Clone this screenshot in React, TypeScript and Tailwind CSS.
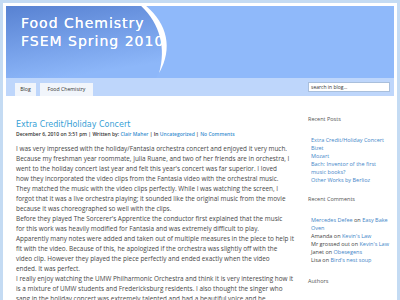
import React from 'react';

const RECENT_POSTS = [
  ['Extra Credit/Holiday Concert'],
  ['Bizet'],
  ['Mozart'],
  ['Bach: Inventor of the first', 'music books?'],
  ['Other Works by Berlioz'],
];

const HeaderArt: React.FC = () => (
  <svg className="absolute inset-0 w-full h-full" viewBox="0 0 388 72" preserveAspectRatio="none">
    <defs>
      <linearGradient id="hdrGrad" x1="0" y1="0" x2="0.35" y2="1">
        <stop offset="0" stopColor="#5882d2" />
        <stop offset="0.55" stopColor="#759fe8" />
        <stop offset="1" stopColor="#8db7f9" />
      </linearGradient>
    </defs>
    <path d="M0 0 L138 0 C158 18 164 42 153 66 L150 72 L0 72 Z" fill="url(#hdrGrad)" />
    <path d="M135 0 L140 0 C161 18 167 42 153 67 C160 42 154 18 135 0 Z" fill="#ffffff" />
  </svg>
);

const App: React.FC = () => {
  return (
    <div className="w-[400px] h-[300px] overflow-hidden bg-[#c4dbf3] pt-[3px] px-[3px]">
      <div className="h-full bg-white pt-[2.5px] pl-[2.5px] pr-[3px] overflow-hidden">
        {/* Header */}
        <div className="relative h-[72px] bg-[#8fb9fa] overflow-hidden">
          <HeaderArt />
          <h1 className="relative pl-[15.5px] pt-[8px] text-white text-[14px] leading-[18px] tracking-[1px] font-['DejaVu_Sans',sans-serif] [text-shadow:0_0_0.4px_#fff]">
            Food Chemistry
            <br />
            FSEM Spring 2010
          </h1>
        </div>

        {/* Nav */}
        <div className="h-[18px] bg-[#bed6fb] flex justify-between pl-[9.5px] pr-[4px] font-['Open_Sans',sans-serif]">
          <div className="flex items-end gap-[4px]">
            <span className="h-[12.5px] w-[21px] bg-[#f1f5fb] text-[#333] text-[5.2px] leading-[12.5px] text-center">Blog</span>
            <span className="h-[12.5px] w-[53px] bg-[#f1f5fb] text-[#333] text-[5.2px] leading-[12.5px] text-center">Food Chemistry</span>
          </div>
          <div className="pt-[4.5px]">
            <div className="w-[82px] h-[10px] bg-white border border-[#a9bfdc] text-[5px] leading-[8px] pl-[2px] text-[#333]">
              search in blog...
            </div>
          </div>
        </div>

        {/* Content */}
        <div className="flex">
          <main className="w-[302.5px] pl-[10.5px] pt-[24px] font-['Open_Sans',sans-serif]">
            <h2 className="text-[8px] leading-[10px] text-[#389fd6] font-['DejaVu_Sans',sans-serif]">
              Extra Credit/Holiday Concert
            </h2>
            <div className="text-[5px] leading-[8px] font-semibold text-[#333] whitespace-nowrap">
              December 6, 2010 on 3:51 pm | Written by: <span className="text-[#3a8fd0]">Clair Maher</span> | In{' '}
              <span className="text-[#3a8fd0]">Uncategorized</span> | <span className="text-[#3a8fd0]">No Comments</span>
            </div>
            <div className="mt-[6px] text-[6.4px] leading-[10px] text-[#474747] whitespace-nowrap">
              <p>
                I was very impressed with the holiday/Fantasia orchestra concert and enjoyed it very much.
                <br />
                Because my freshman year roommate, Julia Ruane, and two of her friends are in orchestra, I
                <br />
                went to the holiday concert last year and felt this year's concert was far superior. I loved
                <br />
                how they incorporated the video clips from the Fantasia video with the orchestral music.
                <br />
                They matched the music with the video clips perfectly. While I was watching the screen, I
                <br />
                forgot that it was a live orchestra playing; it sounded like the original music from the movie
                <br />
                because it was choreographed so well with the clips.
              </p>
              <p>
                Before they played The Sorcerer's Apprentice the conductor first explained that the music
                <br />
                for this work was heavily modified for Fantasia and was extremely difficult to play.
                <br />
                Apparently many notes were added and taken out of multiple measures in the piece to help it
                <br />
                fit with the video. Because of this, he apologized if the orchestra was slightly off with the
                <br />
                video clip. However they played the piece perfectly and ended exactly when the video
                <br />
                ended. It was perfect.
              </p>
              <p>
                I really enjoy watching the UMW Philharmonic Orchestra and think it is very interesting how it
                <br />
                is a mixture of UMW students and Fredericksburg residents. I also thought the singer who
                <br />
                sang in the holiday concert was extremely talented and had a beautiful voice and he
              </p>
            </div>
          </main>

          <aside className="flex-1 pt-[19px] text-[5.5px] leading-[8px] font-['Open_Sans',sans-serif] whitespace-nowrap">
            <h3 className="text-[#555]">Recent Posts</h3>
            <ul className="mt-[13px] pl-[3px] text-[#3f86c8]">
              {RECENT_POSTS.map((lines) => (
                <li key={lines[0]}>
                  {lines.map((l, i) => (
                    <React.Fragment key={l}>
                      {i > 0 && <br />}
                      {l}
                    </React.Fragment>
                  ))}
                </li>
              ))}
            </ul>

            <h3 className="mt-[11.5px] text-[#555]">Recent Comments</h3>
            <ul className="mt-[13px] pl-[3px] text-[#444]">
              <li>
                <span className="text-[#3f86c8]">Mercedes Defee</span> on <span className="text-[#3f86c8]">Easy Bake</span>
                <br />
                <span className="text-[#3f86c8]">Oven</span>
              </li>
              <li>
                Amanda on <span className="text-[#3f86c8]">Kevin's Law</span>
              </li>
              <li>
                Mr grossed out on <span className="text-[#3f86c8]">Kevin's Law</span>
              </li>
              <li>
                Janet on <span className="text-[#3f86c8]">Obesegens</span>
              </li>
              <li>
                Lisa on <span className="text-[#3f86c8]">Bird's nest soup</span>
              </li>
            </ul>

            <h3 className="mt-[12.5px] text-[#555]">Authors</h3>
            <ul className="mt-[13px] pl-[3px] text-[#3f86c8]">
              <li>Clair Maher</li>
            </ul>
          </aside>
        </div>
      </div>
    </div>
  );
};

export default App;
